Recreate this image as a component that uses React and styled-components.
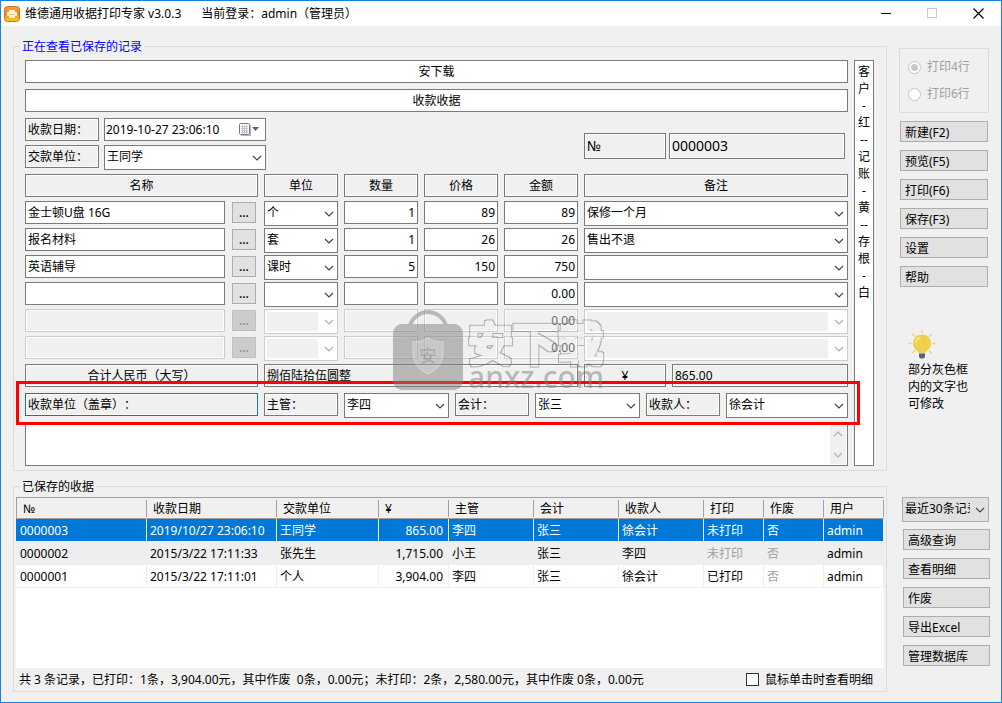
import { useState } from 'react';
import styled, { createGlobalStyle, css } from 'styled-components';

const FONT = '"Noto Sans", "Noto Sans CJK SC", sans-serif';
const FORM_COLUMNS = '233px 74px 74px 74px 74px 1fr';

const ITEMS = [
    { name: '金士顿U盘 16G', unit: '个', qty: '1', price: '89', amount: '89', remark: '保修一个月' },
    { name: '报名材料', unit: '套', qty: '1', price: '26', amount: '26', remark: '售出不退' },
    { name: '英语辅导', unit: '课时', qty: '5', price: '150', amount: '750', remark: '' },
    { name: '', unit: '', qty: '', price: '', amount: '0.00', remark: '' },
    { name: '', unit: '', qty: '', price: '', amount: '0.00', remark: '', disabled: true },
    { name: '', unit: '', qty: '', price: '', amount: '0.00', remark: '', disabled: true },
];

const COPIES = ['客', '户', '-', '红', '--', '记', '账', '-', '黄', '--', '存', '根', '-', '白'];

const LIST_COLUMNS = [
    { title: '№', width: 131 },
    { title: '收款日期', width: 130 },
    { title: '交款单位', width: 102 },
    { title: '¥', width: 70 },
    { title: '主管', width: 85 },
    { title: '会计', width: 85 },
    { title: '收款人', width: 85 },
    { title: '打印', width: 60 },
    { title: '作废', width: 60 },
    { title: '用户' },
];

const RECEIPTS = [
    ['0000003', '2019/10/27 23:06:10', '王同学', '865.00', '李四', '张三', '徐会计', '未打印', '否', 'admin'],
    ['0000002', '2015/3/22 17:11:33', '张先生', '1,715.00', '小王', '张三', '李四', '未打印', '否', 'admin'],
    ['0000001', '2015/3/22 17:11:01', '个人', '3,904.00', '李四', '张三', '徐会计', '已打印', '否', 'admin'],
];

const Chevron = ({ up = false }) => (
    <svg width="10" height="6" viewBox="0 0 10 6" fill="none" stroke="currentColor" strokeWidth="1.2">
        <path d={up ? 'M1 5l4-4 4 4' : 'M1 1l4 4 4-4'} />
    </svg>
);

const Combo = ({ label, value, options = [], disabled = false, grey = false }) => (
    <ComboBox $disabled={disabled}>
        <ComboSelect aria-label={label} defaultValue={value} disabled={disabled} $grey={grey}>
            <option value={value}>{value}</option>
            {options.map((option) => <option key={option} value={option}>{option}</option>)}
        </ComboSelect>
        <Chevron />
    </ComboBox>
);

const AppLogo = () => (
    <svg width="16" height="16" viewBox="0 0 16 16">
        <defs>
            <linearGradient id="logoFill" x1="0" y1="0" x2="0" y2="1">
                <stop offset="0" stopColor="#f6a044" />
                <stop offset="0.5" stopColor="#f08a1c" />
                <stop offset="1" stopColor="#ffd21f" />
            </linearGradient>
        </defs>
        <rect x="0.5" y="0.5" width="15" height="15" rx="3" fill="url(#logoFill)" stroke="#d0701a" />
        <path d="M5 4h6v2h2v4h-2v2H5v-2H3V6h2z" fill="#fff3dc" />
        <path d="M5 8.5h6" stroke="#f5c87c" />
    </svg>
);

const CalendarIcon = () => (
    <svg width="22" height="13" viewBox="0 0 22 13">
        <path d="M2 2h10v11H2z" fill="#b9b4b4" />
        <rect x="0.5" y="0.5" width="10" height="11" rx="1" fill="#fff" stroke="#7d7777" />
        <path d="M2 3.5h7M2 5.5h7M2 7.5h7M2 9.5h7M3.5 2v8.5M5.5 2v8.5M7.5 2v8.5" stroke="#a9b4c4" strokeWidth="0.7" />
        <path d="M13 4h7l-3.5 4z" fill="#41648a" />
    </svg>
);

const Bulb = () => (
    <svg width="28" height="30" viewBox="0 0 28 30">
        <path
            d="M14 0v3M4.5 4l2.5 2.5M23.5 4L21 6.5M0.5 13.5h3M24.5 13.5h3M4.5 23L7 20.5M23.5 23L21 20.5"
            stroke="#f2d367"
            strokeWidth="1.5"
        />
        <path d="M14 4.5a9 9 0 0 0-5.5 16.1c1.5 1.1 2.3 1.7 2.5 2.9h6c.2-1.2 1-1.8 2.5-2.9A9 9 0 0 0 14 4.5z" fill="#f0cf4c" />
        <path d="M8 12.5c.4-2.8 2-4.4 4.5-5" stroke="#f9e9a8" strokeWidth="1.3" fill="none" />
        <path d="M11 23.5h6v3.5l-1.5 1.5h-3L11 27z" fill="#56607f" />
    </svg>
);

const BagLogo = () => (
    <svg width="70" height="80" viewBox="0 0 70 80">
        <defs>
            <filter id="outline" x="-10%" y="-10%" width="120%" height="120%">
                <feMorphology in="SourceAlpha" operator="dilate" radius="3" result="outer" />
                <feMorphology in="SourceAlpha" operator="dilate" radius="2" result="inner" />
                <feFlood floodColor="#707070" />
                <feComposite in2="outer" operator="in" />
                <feComposite in2="inner" operator="out" />
            </filter>
        </defs>
        <path d="M17 15C20 7 27 2 35 2s15 5 18 13" fill="none" stroke="#808080" strokeWidth="4" />
        <rect x="0" y="14" width="70" height="66" rx="9" fill="#808080" />
        <path d="M35 28c5 3 10 4 15 4v12c0 9-6 16-15 20-9-4-15-11-15-20V32c5 0 10-1 15-4z" fill="#a0a0a0" stroke="#c0c0c0" />
        <text x="35" y="52" textAnchor="middle" fontSize="17" fontWeight="700" fill="#707070">安</text>
    </svg>
);

const TitleBar = () => (
    <TitleStrip>
        <AppLogo />
        <TitleText>维德通用收据打印专家 v3.0.3</TitleText>
        <LoginText>当前登录：admin（管理员）</LoginText>
        <WindowButton aria-label="最小化">
            <svg width="11" height="11" stroke="#000"><path d="M0 5.5h10" /></svg>
        </WindowButton>
        <WindowButton aria-label="最大化" disabled>
            <svg width="11" height="11" stroke="#c8c8c8" fill="none"><path d="M.5.5h9v9h-9z" /></svg>
        </WindowButton>
        <WindowButton aria-label="关闭">
            <svg width="11" height="11" stroke="#000" strokeWidth="1.2"><path d="M.5.5l10 10M10.5.5l-10 10" /></svg>
        </WindowButton>
    </TitleStrip>
);

const ReceiptForm = () => (
    <Form>
        <TextField aria-label="单位抬头" defaultValue="安下载" $align="center" />
        <TextField aria-label="收据标题" defaultValue="收款收据" $align="center" />
        <MetaRow>
            <MetaFields>
                <CaptionField aria-label="收款日期标题" defaultValue="收款日期：" />
                <DateBox>
                    <DateInput aria-label="收款日期" defaultValue="2019-10-27 23:06:10" />
                    <DateButton aria-label="选择日期"><CalendarIcon /></DateButton>
                </DateBox>
                <CaptionField aria-label="交款单位标题" defaultValue="交款单位：" />
                <Combo label="交款单位" value="王同学" options={['张先生', '个人']} />
            </MetaFields>
            <NumberFields>
                <CaptionField aria-label="编号标题" defaultValue="№" $large />
                <CaptionField aria-label="编号" defaultValue="0000003" $large />
            </NumberFields>
        </MetaRow>
        <ItemGrid>
            {['名称', '单位', '数量', '价格', '金额', '备注'].map((title) => (
                <CaptionField key={title} aria-label={`${title}标题`} defaultValue={title} $align="center" $header />
            ))}
            {ITEMS.map((item, index) => <ItemRow key={index} item={item} number={index + 1} />)}
        </ItemGrid>
        <TotalRow>
            <CaptionField aria-label="合计标题" defaultValue="合计人民币（大写）" $align="center" />
            <TotalWords aria-label="大写金额" defaultValue="捌佰陆拾伍圆整" />
            <TotalAmount>
                <CaptionField aria-label="货币符号" defaultValue="¥" $align="center" />
                <CaptionField aria-label="合计金额" defaultValue="865.00" />
            </TotalAmount>
        </TotalRow>
        <SignRow>
            <CaptionField aria-label="收款单位标题" defaultValue="收款单位（盖章）：" $focused />
            <CaptionField aria-label="主管标题" defaultValue="主管：" />
            <Combo label="主管" value="李四" options={['小王']} />
            <CaptionField aria-label="会计标题" defaultValue="会计：" />
            <Combo label="会计" value="张三" />
            <CaptionField aria-label="收款人标题" defaultValue="收款人：" />
            <Combo label="收款人" value="徐会计" options={['李四']} />
        </SignRow>
        <NoteBox>
            <NoteText aria-label="附注" />
            <ScrollTrack>
                <Chevron up />
                <Chevron />
            </ScrollTrack>
        </NoteBox>
        <Watermark>
            <BagLogo />
            <div>
                <WatermarkName>安下载</WatermarkName>
                <WatermarkSite>anxz.com</WatermarkSite>
            </div>
        </Watermark>
    </Form>
);

const ItemRow = ({ item, number }) => (
    <>
        <NameCell>
            <TextField aria-label={`名称${number}`} defaultValue={item.name} disabled={item.disabled} />
            <PickButton aria-label={`选择名称${number}`} disabled={item.disabled}>...</PickButton>
        </NameCell>
        <Combo label={`单位${number}`} value={item.unit} disabled={item.disabled} />
        <TextField aria-label={`数量${number}`} defaultValue={item.qty} disabled={item.disabled} $align="right" />
        <TextField aria-label={`价格${number}`} defaultValue={item.price} disabled={item.disabled} $align="right" />
        <TextField aria-label={`金额${number}`} defaultValue={item.amount} disabled={item.disabled} $align="right" />
        <Combo label={`备注${number}`} value={item.remark} disabled={item.disabled} />
    </>
);

const ReceiptList = () => {
    const [selected, setSelected] = useState(0);

    return (
        <ListBody>
            <TableArea>
                <Table>
                    <colgroup>
                        {LIST_COLUMNS.map((column) => <col key={column.title} width={column.width} />)}
                    </colgroup>
                    <thead>
                        <tr>
                            {LIST_COLUMNS.map((column) => <HeadCell key={column.title}>{column.title}</HeadCell>)}
                        </tr>
                    </thead>
                    <tbody>
                        {RECEIPTS.map((receipt, row) => (
                            <ListRow key={receipt[0]} $selected={row === selected} onClick={() => setSelected(row)}>
                                {receipt.map((text, column) => (
                                    <Cell
                                        key={column}
                                        $right={column === 3}
                                        $faded={row !== selected && (text === '未打印' || text === '否')}
                                    >
                                        {text}
                                    </Cell>
                                ))}
                            </ListRow>
                        ))}
                    </tbody>
                </Table>
            </TableArea>
            <ListFooter>
                <Summary>
                    共 3 条记录，已打印：1条，3,904.00元，其中作废&nbsp; 0条，0.00元；未打印：2条，2,580.00元，其中作废 0条，0.00元
                </Summary>
                <CheckLabel>
                    <CheckBox type="checkbox" />
                    鼠标单击时查看明细
                </CheckLabel>
            </ListFooter>
        </ListBody>
    );
};

const App = () => {
    return <>
        <GlobalStyle />
        <Window>
            <TitleBar />
            <Content>
                <GroupBox>
                    <GroupTitle $blue>正在查看已保存的记录</GroupTitle>
                    <ReceiptBody>
                        <ReceiptForm />
                        <CopyStrip>
                            {COPIES.map((text, index) => <span key={index}>{text}</span>)}
                        </CopyStrip>
                    </ReceiptBody>
                </GroupBox>
                <ActionPanel>
                    <PrintLines>
                        <RadioLabel>
                            <Radio type="radio" name="lines" defaultChecked disabled />
                            打印4行
                        </RadioLabel>
                        <RadioLabel>
                            <Radio type="radio" name="lines" disabled />
                            打印6行
                        </RadioLabel>
                    </PrintLines>
                    <ButtonStack>
                        {['新建(F2)', '预览(F5)', '打印(F6)', '保存(F3)', '设置', '帮助'].map((text) => (
                            <SideButton key={text}>{text}</SideButton>
                        ))}
                    </ButtonStack>
                    <Tip>
                        <Bulb />
                        <p>部分灰色框内的文字也可修改</p>
                    </Tip>
                </ActionPanel>
                <GroupBox>
                    <GroupTitle>已保存的收据</GroupTitle>
                    <ReceiptList />
                </GroupBox>
                <ListPanel>
                    <Combo label="显示范围" value="最近30条记录" options={['全部记录']} grey />
                    <ButtonStack>
                        {['高级查询', '查看明细', '作废', '导出Excel', '管理数据库'].map((text) => (
                            <SideButton key={text}>{text}</SideButton>
                        ))}
                    </ButtonStack>
                </ListPanel>
            </Content>
        </Window>
    </>;
};

const GlobalStyle = createGlobalStyle`
    *, *::before, *::after {
        box-sizing: border-box;
    }

    body {
        margin: 0;
        background-color: #f0f0f0;
        color: #000;
        font: 12px/16px ${FONT};
        text-spacing-trim: space-all;
    }

    p {
        margin: 0;
    }

    svg {
        display: block;
        flex: none;
    }

    input, select, button, textarea {
        margin: 0;
        font: inherit;
        color: inherit;
        border-radius: 0;
        text-spacing-trim: space-all;
    }
`;

const Window = styled.div`
    min-height: 100vh;
    display: flex;
    flex-direction: column;
    border: 1px solid #1883d7;
`;

const TitleStrip = styled.header`
    height: 25px;
    display: flex;
    align-items: center;
    padding-left: 3px;
    background-color: #fff;
`;

const TitleText = styled.h1`
    margin: 0 20px 0 5px;
    font-size: 12px;
    font-weight: 400;
`;

const LoginText = styled.span`
    flex: 1;
`;

const WindowButton = styled.button`
    width: 46px;
    height: 25px;
    display: flex;
    align-items: center;
    justify-content: center;
    border: 0;
    padding: 0;
    background: none;
`;

const Content = styled.main`
    flex: 1;
    display: grid;
    grid-template-columns: minmax(0, 1fr) 91px;
    grid-template-rows: auto 1fr;
    gap: 7px 12px;
    padding: 12px 11px 10px 12px;
`;

const GroupBox = styled.fieldset`
    display: flex;
    flex-direction: column;
    min-width: 0;
    margin: 0;
    padding: 0;
    border: 1px solid #dcdcdc;
`;

const GroupTitle = styled.legend`
    height: 16px;
    margin-left: 6px;
    padding: 0 2px;
    line-height: 18px;
    color: ${(props) => (props.$blue ? '#0000ff' : '#000')};
`;

const ReceiptBody = styled.div`
    display: flex;
    gap: 6px;
    padding: 6px 12px 4px 11px;
`;

const Form = styled.form`
    position: relative;
    flex: 1;
    min-width: 0;
    display: flex;
    flex-direction: column;
`;

const fieldBox = css`
    display: block;
    width: 100%;
    min-width: 0;
    height: 23px;
    padding: 0 2px 1px;
    border: 1px solid ${(props) => (props.$focused ? '#0078d7' : '#7a7a7a')};
    background-color: #fff;
    text-align: ${(props) => props.$align || 'left'};
    outline: none;
`;

const TextField = styled.input`
    ${fieldBox}

    ${Form} > & {
        margin-bottom: 6px;
    }

    &:disabled {
        border-color: #ccc;
        background-color: #f0f0f0;
        box-shadow: inset 0 0 0 1px #fff;
        color: #6d6d6d;
    }
`;

const CaptionField = styled.input`
    ${fieldBox}
    height: ${(props) => (props.$large ? 26 : 23)}px;
    margin-bottom: ${(props) => (props.$header ? 2 : 0)}px;
    background-color: #f0f0f0;
    box-shadow: inset 0 0 0 1px #fff;
    font-size: ${(props) => (props.$large ? 14 : 12)}px;
`;

const ComboBox = styled.div`
    display: grid;
    align-items: center;
    min-width: 0;
    color: ${(props) => (props.$disabled ? '#b0b0b0' : '#444')};

    & > * {
        grid-area: 1 / 1;
    }

    & > svg {
        justify-self: end;
        margin-right: 4px;
        pointer-events: none;
    }
`;

const ComboSelect = styled.select`
    appearance: none;
    width: 100%;
    min-width: 0;
    height: 25px;
    padding: 0 18px 1px 2px;
    border: 1px solid ${(props) => (props.$grey ? '#adadad' : '#7a7a7a')};
    background-color: ${(props) => (props.$grey ? '#e1e1e1' : '#fff')};
    color: #000;
    outline: none;

    &:disabled {
        border-color: #ccc;
        background: linear-gradient(#f0f0f0, #f0f0f0) 2px 2px / calc(100% - 21px) calc(100% - 4px) no-repeat #fff;
        opacity: 1;
    }
`;

const MetaRow = styled.div`
    display: grid;
    grid-template-columns: ${FORM_COLUMNS};
    column-gap: 6px;
    align-items: center;
    margin-bottom: 4px;
`;

const MetaFields = styled.div`
    grid-column: 1 / 6;
    display: grid;
    grid-template-columns: 74px 162px;
    gap: 4px 5px;
`;

const NumberFields = styled.div`
    display: grid;
    grid-template-columns: 82px 1fr;
    gap: 3px;
    padding: 4px 3px 0 0;
`;

const DateBox = styled.div`
    display: flex;
    align-items: center;
    height: 23px;
    border: 1px solid #7a7a7a;
    background-color: #fff;
`;

const DateInput = styled.input`
    flex: 1;
    min-width: 0;
    border: 0;
    padding: 0 1px;
    background: none;
    outline: none;
`;

const DateButton = styled.button`
    padding: 0 4px 0 0;
    border: 0;
    background: none;
`;

const ItemGrid = styled.div`
    display: grid;
    grid-template-columns: ${FORM_COLUMNS};
    gap: 2px 6px;
    align-items: start;
`;

const NameCell = styled.div`
    display: grid;
    grid-template-columns: 200px 24px;
    gap: 7px;
    align-items: center;
`;

const PickButton = styled.button`
    height: 21px;
    padding: 0;
    border: 1px solid #adadad;
    background-color: #e1e1e1;
    font-weight: 500;

    &:disabled {
        border-color: #bfbfbf;
        background-color: #ccc;
        color: #8a8a8a;
    }
`;

const TotalRow = styled.div`
    display: grid;
    grid-template-columns: ${FORM_COLUMNS};
    column-gap: 6px;
    margin: 3px 0 6px;
`;

const TotalWords = styled(CaptionField)`
    grid-column: 2 / 6;
`;

const TotalAmount = styled.div`
    display: grid;
    grid-template-columns: 82px 1fr;
    gap: 6px;
`;

/* the red frame runs over the neighbouring rows */
const SignRow = styled.div`
    position: relative;
    display: grid;
    grid-template-columns: 233px 74px 105px 74px 105px 74px 1fr;
    column-gap: 6px;

    &::after {
        content: '';
        position: absolute;
        inset: -12px -12px -7px -9px;
        border: 3px solid #ff0000;
        pointer-events: none;
    }
`;

const NoteBox = styled.div`
    display: flex;
    height: 44px;
    margin-top: 4px;
    padding: 1px;
    border: 1px solid #7a7a7a;
    background-color: #fff;
`;

const NoteText = styled.textarea`
    flex: 1;
    border: 0;
    padding: 2px;
    resize: none;
    background: none;
    outline: none;
`;

const ScrollTrack = styled.div`
    width: 16px;
    display: flex;
    flex-direction: column;
    align-items: center;
    justify-content: space-between;
    padding: 7px 0 6px;
    background-color: #f0f0f0;
    color: #b0b0b0;
`;

const Watermark = styled.div`
    position: absolute;
    top: 250px;
    left: 368px;
    display: flex;
    gap: 5px;
    opacity: 0.5;
    color: #808080;
    pointer-events: none;
`;

const WatermarkName = styled.div`
    padding-top: 12px;
    font-size: 45px;
    font-weight: 400;
    line-height: 44px;
    filter: url(#outline);
`;

const WatermarkSite = styled.div`
    font-size: 30px;
    line-height: 22px;
    font-weight: 500;
`;

const CopyStrip = styled.div`
    width: 20px;
    display: flex;
    flex-direction: column;
    align-items: center;
    padding-top: 2px;
    border: 1px solid #7a7a7a;
    background-color: #fff;
    line-height: 17px;
`;

const ActionPanel = styled.aside`
    padding-top: 10px;
`;

const PrintLines = styled.div`
    width: 90px;
    height: 65px;
    display: flex;
    flex-direction: column;
    gap: 9px;
    margin-bottom: 8px;
    padding: 9px 0 0 8px;
    border: 1px solid #dcdcdc;
`;

const RadioLabel = styled.label`
    display: flex;
    align-items: center;
    gap: 6px;
    line-height: 18px;
    color: #a0a0a0;
`;

const Radio = styled.input`
    appearance: none;
    width: 13px;
    height: 13px;
    border: 1px solid #c4c4c4;
    background-color: #fff;

    && {
        border-radius: 50%;
    }

    &:checked {
        background-image: radial-gradient(circle, #c8c8c8 3px, #fff 4px);
    }
`;

const ButtonStack = styled.div`
    display: flex;
    flex-direction: column;
    gap: 8px;
    padding: 0 2px 0 1px;
`;

const SideButton = styled.button`
    height: 21px;
    padding: 2px 0 0 4px;
    border: 1px solid #adadad;
    background-color: #e1e1e1;
    text-align: left;
    line-height: 17px;
    white-space: nowrap;
`;

const Tip = styled.div`
    padding: 43px 18px 0 9px;
    line-height: 17px;

    & p {
        margin-top: 1px;
        width: 64px;
    }
`;

const ListPanel = styled.aside`
    display: flex;
    flex-direction: column;
    gap: 7px;
    padding: 19px 0 0 3px;

    & ${ComboBox} {
        margin-right: 1px;
    }

    & ${ButtonStack} {
        padding: 0 0 0 1px;
    }
`;

const ListBody = styled.div`
    height: 100%;
    display: flex;
    flex-direction: column;
    padding: 3px 2px 0;
`;

const TableArea = styled.div`
    flex: 1;
    background-color: #fff;
`;

const Table = styled.table`
    width: 100%;
    table-layout: fixed;
    border-spacing: 0;
`;

const HeadCell = styled.th`
    height: 22px;
    padding: 2px 0 0 6px;
    border: solid #a0a0a0;
    border-width: 1px 0;
    background: linear-gradient(#a0a0a0, #a0a0a0) right 2px / 1px 17px no-repeat #f0f0f0;
    font-weight: 400;
    text-align: left;

    &:first-child {
        border-left-width: 1px;
    }
`;

const ListRow = styled.tr`
    background-color: ${(props) => (props.$selected ? '#0078d7' : '#fff')};
    color: ${(props) => (props.$selected ? '#fff' : '#000')};

    &:nth-child(even) {
        background-color: ${(props) => (props.$selected ? '#0078d7' : '#eeeeee')};
    }
`;

const Cell = styled.td`
    height: 23px;
    padding: ${(props) => (props.$right ? '2px 5px 0 0' : '2px 0 0 3px')};
    border: solid #eee;
    border-width: 0 1px 1px 0;
    text-align: ${(props) => (props.$right ? 'right' : 'left')};
    color: ${(props) => (props.$faded ? '#a0a0a0' : 'inherit')};
    white-space: nowrap;

    &:first-child {
        padding-left: 4px;
    }
`;

const ListFooter = styled.div`
    height: 23px;
    display: flex;
    align-items: center;
    justify-content: space-between;
    padding: 0 11px 0 3px;
`;

const Summary = styled.span`
    white-space: nowrap;
`;

const CheckLabel = styled.label`
    display: flex;
    align-items: center;
    gap: 6px;
    white-space: nowrap;
`;

const CheckBox = styled.input`
    appearance: none;
    width: 13px;
    height: 13px;
    border: 1px solid #333;
    background-color: #fff;

    &:checked {
        box-shadow: inset 0 0 0 2px #fff;
        background-color: #333;
    }
`;

export default App;
